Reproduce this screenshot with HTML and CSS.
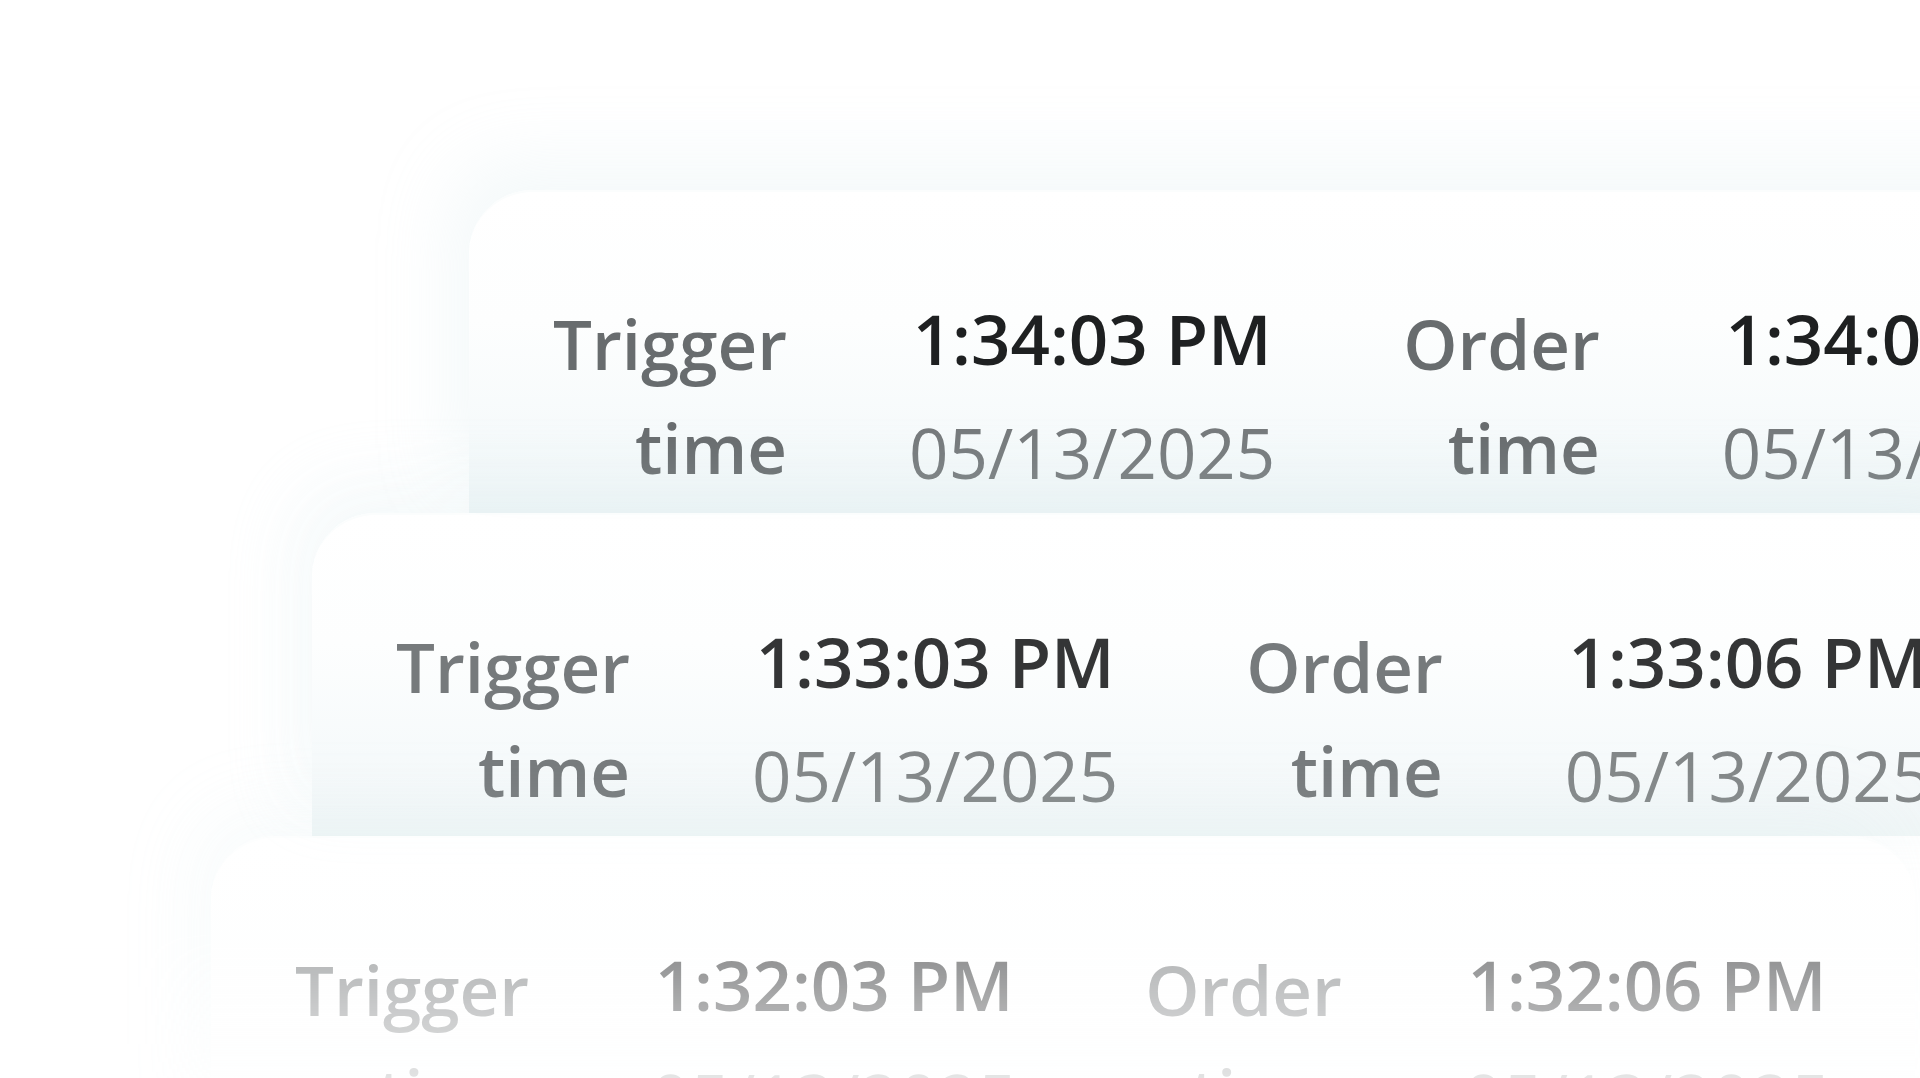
FILE: index.html
```html
<!DOCTYPE html>
<html lang="en">
<head>
    <meta charset="UTF-8">
    <meta name="viewport" content="width=device-width, initial-scale=1.0">
    <title>Orders</title>
    <link rel="stylesheet" href="styles.css">
</head>
<body>
    <div class="stage">
        <div class="stack">
            <div class="card card-1">
                <div class="field">
                    <div class="label">Trigger<br>time</div>
                    <div class="value">
                        <div class="clock">1:34:03 PM</div>
                        <div class="date">05/13/2025</div>
                    </div>
                </div>
                <div class="field">
                    <div class="label">Order<br>time</div>
                    <div class="value">
                        <div class="clock">1:34:06 PM</div>
                        <div class="date">05/13/2025</div>
                    </div>
                </div>
            </div>
            <div class="card card-2">
                <div class="field">
                    <div class="label">Trigger<br>time</div>
                    <div class="value">
                        <div class="clock">1:33:03 PM</div>
                        <div class="date">05/13/2025</div>
                    </div>
                </div>
                <div class="field">
                    <div class="label">Order<br>time</div>
                    <div class="value">
                        <div class="clock">1:33:06 PM</div>
                        <div class="date">05/13/2025</div>
                    </div>
                </div>
            </div>
            <div class="card card-3">
                <div class="field">
                    <div class="label">Trigger<br>time</div>
                    <div class="value">
                        <div class="clock">1:32:03 PM</div>
                        <div class="date">05/13/2025</div>
                    </div>
                </div>
                <div class="field">
                    <div class="label">Order<br>time</div>
                    <div class="value">
                        <div class="clock">1:32:06 PM</div>
                        <div class="date">05/13/2025</div>
                    </div>
                </div>
            </div>
        </div>
    </div>
</body>
</html>
```

FILE: styles.css
```css
* {
    margin: 0px;
    padding: 0px;
    box-sizing: border-box;
}
body,html {
    width: 100%;
    height: 100%;
}
body {
    background: #ffffff;
    overflow: hidden;
    font-family: 'Open Sans', 'Noto Sans', sans-serif;
}
.stage {
    width: 1920px;
    height: 1078px;
    overflow: hidden;
    -webkit-mask-image: linear-gradient(to bottom, #000 0px, #000 930px, rgba(0,0,0,0.35) 1078px);
    mask-image: linear-gradient(to bottom, #000 0px, #000 930px, rgba(0,0,0,0.35) 1078px);
}
.stack {
    display: flex;
    flex-direction: column;
    margin-top: 190px;
}
.card {
    flex-shrink: 0;
    width: 1704px;
    height: 323px;
    padding: 99px 0px 0px 84px;
    display: flex;
    gap: 128px;
    border-radius: 64px 64px 0px 0px;
    border-top: 2px solid #fbfdfd;
    background: linear-gradient(to bottom, #ffffff 0%, #fdfefe 40%, #f6fafb 75%, #eef5f6 100%);
    box-shadow: -20px -30px 70px rgba(214, 232, 236, 0.26);
}
.card-1 {
    margin-left: 469px;
}
.card-2 {
    margin-left: 312px;
    opacity: 0.9;
}
.card-3 {
    margin-left: 211px;
    opacity: 0.55;
    background: linear-gradient(to bottom, #ffffff 0%, #fdfefe 60%, #f6fafb 100%);
}
.field {
    display: flex;
    gap: 122px;
}
.label {
    text-align: right;
    font-size: 69px;
    line-height: 104px;
    font-weight: 600;
    color: #686c6e;
}
.value {
    text-align: center;
    font-size: 69px;
    line-height: 104px;
    margin-top: -5px;
}
.clock {
    font-weight: 600;
    color: #1e2021;
}
.date {
    font-weight: 400;
    color: #75797b;
    margin-top: 10px;
}
```
